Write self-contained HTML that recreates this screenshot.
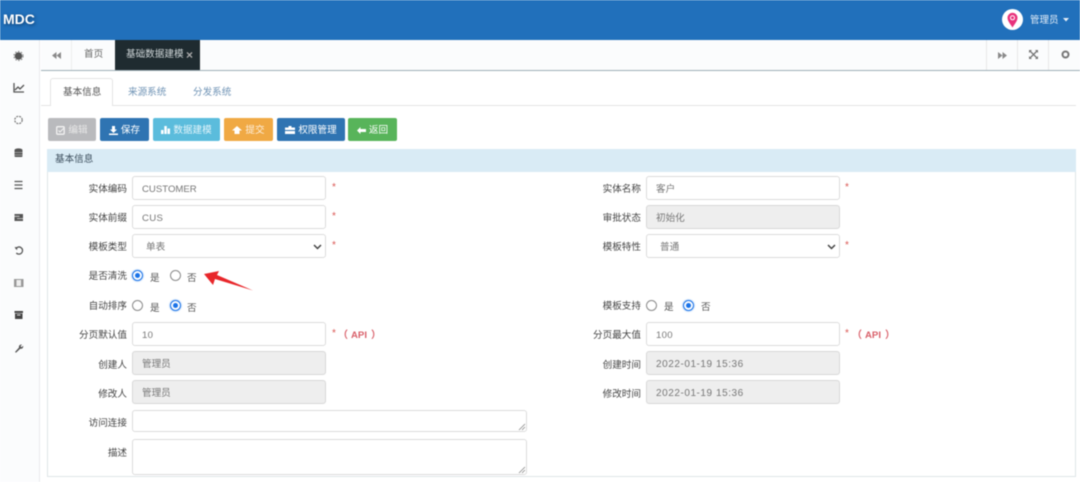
<!DOCTYPE html>
<html lang="zh"><head><meta charset="utf-8"><title>MDC</title>
<style>
*{box-sizing:border-box}
html,body{margin:0;padding:0}
body{width:1080px;height:482px;overflow:hidden;background:#fff;position:relative;font-family:"Liberation Sans","Noto Sans CJK SC",sans-serif;font-size:9.6px;color:#555}
#w{position:absolute;left:0;top:0;width:1080px;height:482px;filter:blur(.5px);overflow:hidden}
.a{position:absolute}
.t{position:absolute;white-space:nowrap;line-height:14px;margin-top:2px}
.l{position:absolute;width:80px;text-align:right;white-space:nowrap;line-height:14px;font-size:9.6px;color:#444;margin-top:4px}
.i{position:absolute;height:24px;width:194px;border:1px solid #dcdcdc;border-radius:3px;background:#fff;padding:2px 0 0 9px;line-height:22px;font-size:9.6px;color:#777}
.d{background:#eee;border-color:#d8d8d8}
.n{letter-spacing:.3px}
.dt{letter-spacing:.55px;font-size:10px}
.b{position:absolute;top:118px;height:23px;border-radius:2px;color:#fff;font-size:9.6px;line-height:23px;padding-top:1px;white-space:nowrap;display:flex;align-items:center;justify-content:center;gap:3px}
.r{position:absolute;width:11px;height:11px;border-radius:50%;border:1px solid #8a8a8a;background:#fff}
.r.c{border:1.5px solid #1a73e8;box-shadow:0 0 1px 1px #cfe2fa}
.r.c:after{content:"";position:absolute;left:1.5px;top:1.5px;width:5px;height:5px;border-radius:50%;background:#1a73e8}
.s{position:absolute;color:#d9534f;font-size:10px;line-height:14px;white-space:nowrap}
.p{margin-top:4px;font-weight:bold;color:#d9606a}
.ta{position:absolute;left:132px;width:395px;border:1px solid #dcdcdc;border-radius:3px;background:#fff}
.ta svg{position:absolute;right:0;bottom:0}
</style></head><body><div id="w">
<div class="a" style="left:0;top:0;width:1080px;height:39.5px;background:#2170bb"></div>
<div class="t" style="left:3px;top:11px;margin:0;font-size:14px;font-weight:bold;color:#fff;line-height:16px;text-shadow:1px 1px 3px #0a3a6a">MDC</div>
<svg class="a" style="left:1002px;top:9px" width="21" height="21" viewBox="0 0 21 21"><circle cx="10.5" cy="10.5" r="10.5" fill="#fff"/><path d="M10.5 18.5C8 14.5 5.5 12 5.5 8.8a5 5 0 0 1 10 0c0 3.2-2.5 5.700-5 9.700z" fill="#e8327c"/><circle cx="10.500" cy="8.800" r="2.500" fill="#fff"/><circle cx="10.500" cy="8.800" r="1.500" fill="#e8327c"/></svg>
<div class="t" style="left:1030px;top:12px;color:#e6eef7;font-size:9.500px">管理员</div>
<svg class="a" style="left:1063px;top:18px" width="6" height="4"><path d="M0 0h6L3 3.500z" fill="#e6eef7"/></svg>

<div class="a" style="left:0;top:40px;width:40px;height:442px;background:#fbfcfd;border-right:1px solid #e9ebed"></div>
<svg class="a" style="left:0;top:40px" width="40" height="330" viewBox="0 0 40 330" fill="#555" stroke="none">
<circle cx="18.500" cy="16" r="3.800"/><circle cx="18.500" cy="16" r="4.600" fill="none" stroke="#777" stroke-width=".9" stroke-dasharray="1.500 1.500"/>
<path d="M14 43v9h10M15 50l3-3 2 2 4-4" fill="none" stroke="#555" stroke-width="1.300"/>
<circle cx="18.500" cy="80" r="3.700" fill="none" stroke="#777" stroke-width="1.200" stroke-dasharray="2 1"/>
<ellipse cx="18.500" cy="110" rx="4" ry="1.600"/><rect x="14.500" y="110" width="8" height="7" rx="1"/><path d="M14.500 112.500h8M14.500 115h8" stroke="#ddd" stroke-width=".6"/>
<path d="M14.500 141.500h8M14.500 145h8M14.500 148.500h8" stroke="#555" stroke-width="1.300"/>
<rect x="14.500" y="174" width="8.500" height="7" fill="#555"/><path d="M14.500 176.300h5M17 178.600h6" stroke="#ddd" stroke-width=".8"/>
<path d="M15.700 209a3.600 3.600 0 1 1 .6 4" fill="none" stroke="#555" stroke-width="1.300"/><path d="M14.500 207l3 .2-.5 3z"/>
<rect x="14" y="239" width="9.500" height="8" fill="#999"/><rect x="16.500" y="240" width="4.500" height="6" fill="#eee"/>
<rect x="14.500" y="271" width="8.500" height="2" fill="#444"/><rect x="15" y="273.500" width="7.500" height="5.500" fill="#444"/><rect x="17" y="274.500" width="3.500" height="1" fill="#ddd"/>
<path d="M15 312l4-4.500c-.5-1.800 1-3.300 3-3l-1.500 1.700 1 1 1.700-1.500c.3 2-1.200 3.500-3 3l-4.200 4z" fill="#555"/>
</svg>

<div class="a" style="left:41px;top:40px;width:1039px;height:30px;background:#fbfcfd"></div>
<div class="a" style="left:41px;top:70px;width:1039px;height:1px;background:#9fb0b8"></div>
<div class="a" style="left:71px;top:40px;width:1px;height:30px;background:#eee"></div>
<div class="a" style="left:986px;top:40px;width:1px;height:30px;background:#e8e8e8"></div>
<div class="a" style="left:1017px;top:40px;width:1px;height:30px;background:#e8e8e8"></div>
<div class="a" style="left:1048px;top:40px;width:1px;height:30px;background:#e8e8e8"></div>
<svg class="a" style="left:52px;top:52px" width="9" height="7"><path d="M4.500 0v7L0 3.500zM9 0v7L4.500 3.500z" fill="#8a8a8a"/></svg>
<div class="t" style="left:84px;top:46px;color:#666;margin-top:2px">首页</div>
<div class="a" style="left:115px;top:40px;width:85px;height:30px;background:#1f2b30"></div>
<div class="t" style="left:126px;top:46px;color:#cfd6d8">基础数据建模</div>
<div class="t" style="left:186px;top:46px;color:#aaa;font-size:12px;font-weight:bold">×</div>
<svg class="a" style="left:998px;top:52px" width="9" height="7"><path d="M0 0v7l4.500-3.500zM4.500 0v7L9 3.500z" fill="#8a8a8a"/></svg>
<svg class="a" style="left:1029px;top:50px" width="9" height="9" fill="none" stroke="#777" stroke-width="1.300"><path d="M1 1l7 7M8 1L1 8"/><path d="M0 0h3L0 3zM9 0H6l3 3zM0 9h3L0 6zM9 9H6l3-3z" fill="#777" stroke="none"/></svg>
<svg class="a" style="left:1061px;top:50px" width="9" height="9"><circle cx="4.500" cy="4.500" r="3" fill="none" stroke="#777" stroke-width="2"/></svg>

<div class="a" style="left:41px;top:105px;width:1035px;height:1px;background:#e4e4e4"></div>
<div class="a" style="left:50px;top:78px;width:63px;height:28px;background:#fff;border:1px solid #e4e4e4;border-bottom:0;border-radius:3px 3px 0 0"></div>
<div class="t" style="left:63px;top:84px;color:#555">基本信息</div>
<div class="t" style="left:128px;top:84px;color:#6f93b5">来源系统</div>
<div class="t" style="left:193px;top:84px;color:#6f93b5">分发系统</div>

<div class="b" style="left:48px;width:48px;background:#b9babd;color:#e8e8e8"><svg width="9" height="9"><rect x=".7" y=".7" width="7.500" height="7.500" rx="1" fill="none" stroke="#f2f2f2" stroke-width="1.300"/><path d="M2.500 4.500l1.500 1.500 4-4" fill="none" stroke="#f2f2f2" stroke-width="1.100"/></svg>编辑</div>
<div class="b" style="left:100px;width:49px;background:#2f74b2"><svg width="9" height="9"><path d="M3 0h3v3.500h2L4.500 7 1 3.500h2zM0 7.500h9V9H0z" fill="#fff"/></svg>保存</div>
<div class="b" style="left:153px;width:67px;background:#5bbcdc;color:#e3f4fa"><svg width="9" height="8"><path d="M0 4h2.500v4H0zM3.300 0h2.500v8H3.300zM6.500 2.500H9V8H6.500z" fill="#fff"/></svg>数据建模</div>
<div class="b" style="left:224px;width:49px;background:#f0a944;color:#fdeeda"><svg width="10" height="8"><path d="M5 0l5 4.500H7.500V8h-5V4.500H0z" fill="#fff"/></svg>提交</div>
<div class="b" style="left:277px;width:68px;background:#2f74b2"><svg width="10" height="8"><path d="M3.500 0h3v1.500H10V4H0V1.500h3.500zM0 5h10v3H0z" fill="#fff"/></svg>权限管理</div>
<div class="b" style="left:348px;width:49px;background:#58b45a"><svg width="9" height="7"><path d="M0 3.500L3.500 0v2H9v3H3.500v2z" fill="#fff"/></svg>返回</div>

<div class="a" style="left:47px;top:149px;width:1029px;height:328px;border:1px solid #dfe5e8;border-top:0"></div>
<div class="a" style="left:47px;top:149px;width:1029px;height:23px;background:#d9ebf5"></div>
<div class="t" style="left:55px;top:153px;color:#3b4d5c;margin-top:0">基本信息</div>

<div class="l" style="left:47px;top:179px">实体编码</div><div class="i" style="left:132px;top:176px">CUSTOMER</div><div class="s" style="left:332px;top:181px">*</div>
<div class="l" style="left:47px;top:208px">实体前缀</div><div class="i n" style="left:132px;top:205px">CUS</div><div class="s" style="left:332px;top:210px">*</div>
<div class="l" style="left:47px;top:237px">模板类型</div><div class="i" style="left:132px;top:234px;padding-left:13px">单表<svg class="a" style="right:3px;top:9px" width="9" height="6"><path d="M1 1l3.500 3.500L8 1" fill="none" stroke="#444" stroke-width="1.500"/></svg></div><div class="s" style="left:332px;top:239px">*</div>
<div class="l" style="left:47px;top:266px">是否清洗</div>
<div class="r c" style="left:132px;top:270px"></div><div class="t" style="left:150px;top:270px">是</div>
<div class="r" style="left:170px;top:270px"></div><div class="t" style="left:187px;top:270px">否</div>
<svg class="a" style="left:200px;top:268px" width="56" height="26"><path d="M4 6L19 3l-2 4L53 22.500 15 11l-2 6z" fill="#e8262a"/></svg>
<div class="l" style="left:47px;top:296px">自动排序</div>
<div class="r" style="left:132px;top:300px"></div><div class="t" style="left:150px;top:300px">是</div>
<div class="r c" style="left:170px;top:300px"></div><div class="t" style="left:187px;top:300px">否</div>
<div class="l" style="left:47px;top:325px">分页默认值</div><div class="i n" style="left:132px;top:322px">10</div><div class="s" style="left:332px;top:327px">*</div><div class="s p" style="left:338px;top:325px">（</div><div class="s p" style="left:351px;top:325px;font-size:9.600px">API</div><div class="s p" style="left:371px;top:325px">）</div>
<div class="l" style="left:47px;top:355px">创建人</div><div class="i d" style="left:132px;top:351px">管理员</div>
<div class="l" style="left:47px;top:384px">修改人</div><div class="i d" style="left:132px;top:380px">管理员</div>
<div class="l" style="left:47px;top:413px">访问连接</div>
<div class="ta" style="top:410px;height:22px"><svg width="8" height="8"><path d="M7 1L1 7M7 4L4 7" stroke="#888" stroke-width=".8"/></svg></div>
<div class="l" style="left:47px;top:443px">描述</div>
<div class="ta" style="top:439px;height:36px"><svg width="8" height="8"><path d="M7 1L1 7M7 4L4 7" stroke="#888" stroke-width=".8"/></svg></div>

<div class="l" style="left:561px;top:179px">实体名称</div><div class="i" style="left:646px;top:176px">客户</div><div class="s" style="left:845px;top:181px">*</div>
<div class="l" style="left:561px;top:208px">审批状态</div><div class="i d" style="left:646px;top:205px">初始化</div>
<div class="l" style="left:561px;top:237px">模板特性</div><div class="i" style="left:646px;top:234px;padding-left:13px">普通<svg class="a" style="right:3px;top:9px" width="9" height="6"><path d="M1 1l3.500 3.500L8 1" fill="none" stroke="#444" stroke-width="1.500"/></svg></div><div class="s" style="left:845px;top:239px">*</div>
<div class="l" style="left:561px;top:296px">模板支持</div>
<div class="r" style="left:646px;top:300px"></div><div class="t" style="left:664px;top:299px">是</div>
<div class="r c" style="left:683px;top:300px"></div><div class="t" style="left:701px;top:299px">否</div>
<div class="l" style="left:561px;top:325px">分页最大值</div><div class="i n" style="left:646px;top:322px">100</div><div class="s" style="left:845px;top:327px">*</div><div class="s p" style="left:852px;top:325px">（</div><div class="s p" style="left:865px;top:325px;font-size:9.600px">API</div><div class="s p" style="left:885px;top:325px">）</div>
<div class="l" style="left:561px;top:355px">创建时间</div><div class="i d dt" style="left:646px;top:351px">2022-01-19 15:36</div>
<div class="l" style="left:561px;top:384px">修改时间</div><div class="i d dt" style="left:646px;top:380px">2022-01-19 15:36</div>
</div></body></html>
